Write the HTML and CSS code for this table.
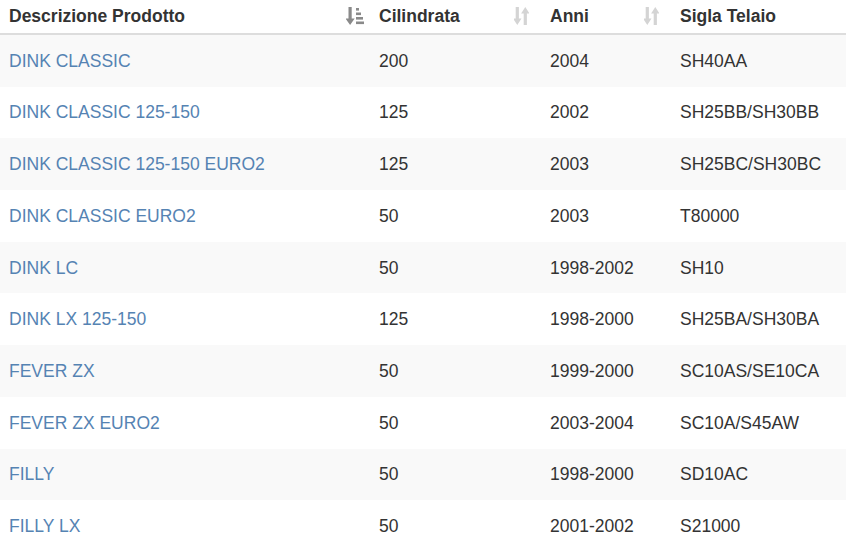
FILE: index.html
```html
<!DOCTYPE html>
<html>
<head>
<meta charset="utf-8">
<link rel="stylesheet" href="styles.css">
</head>
<body>
<table class="grid">
  <colgroup>
    <col class="c1"><col class="c2"><col class="c3"><col class="c4">
  </colgroup>
  <thead>
    <tr>
      <th><div class="th-in"><span>Descrizione Prodotto</span>
        <svg class="ico sorted" width="18" height="20" viewBox="0 0 18 20"><path d="M2.5 1h3.2v11.5h3l-4.6 6.5l-4.6-6.5h3z"/><rect x="10" y="2" width="3" height="2.6"/><rect x="10" y="6.5" width="5" height="2.6"/><rect x="10" y="11" width="7" height="2.6"/><rect x="10" y="15.5" width="8" height="2.6"/></svg></div></th>
      <th><div class="th-in"><span>Cilindrata</span>
        <svg class="ico" width="15" height="20" viewBox="0 0 15 20"><path d="M1.7 1h3.2v11.5h2.6l-4.2 6.5l-4.2-6.5h2.6z"/><path d="M9.7 19h3.2v-11.5h2.6l-4.2-6.5l-4.2 6.5h2.6z"/></svg></div></th>
      <th><div class="th-in"><span>Anni</span>
        <svg class="ico" width="15" height="20" viewBox="0 0 15 20"><path d="M1.7 1h3.2v11.5h2.6l-4.2 6.5l-4.2-6.5h2.6z"/><path d="M9.7 19h3.2v-11.5h2.6l-4.2-6.5l-4.2 6.5h2.6z"/></svg></div></th>
      <th><div class="th-in"><span>Sigla Telaio</span></div></th>
    </tr>
  </thead>
  <tbody>
    <tr><td><a href="#">DINK CLASSIC</a></td><td>200</td><td>2004</td><td>SH40AA</td></tr>
    <tr><td><a href="#">DINK CLASSIC 125-150</a></td><td>125</td><td>2002</td><td>SH25BB/SH30BB</td></tr>
    <tr><td><a href="#">DINK CLASSIC 125-150 EURO2</a></td><td>125</td><td>2003</td><td>SH25BC/SH30BC</td></tr>
    <tr><td><a href="#">DINK CLASSIC EURO2</a></td><td>50</td><td>2003</td><td>T80000</td></tr>
    <tr><td><a href="#">DINK LC</a></td><td>50</td><td>1998-2002</td><td>SH10</td></tr>
    <tr><td><a href="#">DINK LX 125-150</a></td><td>125</td><td>1998-2000</td><td>SH25BA/SH30BA</td></tr>
    <tr><td><a href="#">FEVER ZX</a></td><td>50</td><td>1999-2000</td><td>SC10AS/SE10CA</td></tr>
    <tr><td><a href="#">FEVER ZX EURO2</a></td><td>50</td><td>2003-2004</td><td>SC10A/S45AW</td></tr>
    <tr><td><a href="#">FILLY</a></td><td>50</td><td>1998-2000</td><td>SD10AC</td></tr>
    <tr><td><a href="#">FILLY LX</a></td><td>50</td><td>2001-2002</td><td>S21000</td></tr>
  </tbody>
</table>
</body>
</html>
```
FILE: styles.css
```css
html, body {
  margin: 0;
  padding: 0;
  background: #fff;
}
body {
  font-family: "Liberation Sans", Arial, sans-serif;
  font-size: 17.5px;
  color: #333;
}
.grid {
  width: 846px;
  border-collapse: collapse;
  table-layout: fixed;
}
.c1 { width: 370px; }
.c2 { width: 171px; }
.c3 { width: 130px; }
.c4 { width: 175px; }
th {
  text-align: left;
  font-weight: bold;
  padding: 4px 8px 5px 9px;
  line-height: 24px;
  border-bottom: 2px solid #ddd;
}
.th-in {
  display: flex;
  align-items: center;
  justify-content: space-between;
}
.ico {
  fill: #d4d4d4;
  display: block;
  margin-right: 4px;
}
.ico.sorted {
  fill: #8a8a8a;
  margin-right: -2px;
}
td {
  padding: 13.8px 8px 12.9px 9px;
  line-height: 25px;
  vertical-align: middle;
}
tbody tr:nth-child(odd) {
  background: #f9f9f9;
}
a {
  color: #5583b3;
  text-decoration: none;
}
```
